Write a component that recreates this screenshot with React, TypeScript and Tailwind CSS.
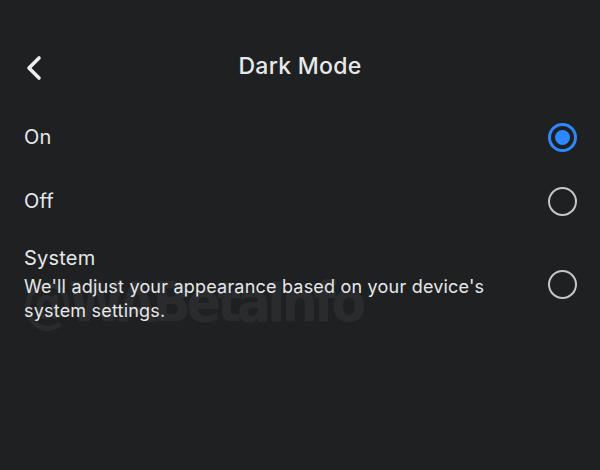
import React, { useState } from "react";

type Option = { id: string; label: string; desc?: string };

const options: Option[] = [
  { id: "on", label: "On" },
  { id: "off", label: "Off" },
  {
    id: "system",
    label: "System",
    desc: "We'll adjust your appearance based on your device's system settings.",
  },
];

const Radio = ({ checked }: { checked: boolean }) => {
  if (checked) {
    return (
      <div className="w-[29px] h-[29px] rounded-full border-[3px] border-[#2d88ff] flex items-center justify-center">
        <div className="w-[15px] h-[15px] rounded-full bg-[#2d88ff]" />
      </div>
    );
  }
  return <div className="w-[29px] h-[29px] rounded-full border-[2.5px] border-[#c4c6ca]" />;
};

export default function App() {
  const [selected, setSelected] = useState("on");

  return (
    <div
      className="w-[600px] h-[470px] bg-[#1f2022] text-[#e7e8ea] relative overflow-hidden"
      style={{ fontFamily: "Inter, 'Noto Sans', sans-serif" }}
    >
      {/* watermark */}
      <div
        className="absolute left-[22px] top-[270px] text-[56px] leading-[64px] font-black text-white/[0.05] pointer-events-none tracking-[-4px]"
        style={{ fontFamily: "'DejaVu Sans Condensed', 'DejaVu Sans', sans-serif" }}
      >
        @WABetaInfo
      </div>

      {/* header */}
      <div className="h-[68px] mt-[34px] flex items-center relative">
        <button className="absolute left-[24px] top-[20px] w-[22px] h-[28px] flex items-center">
          <svg width="20" height="26" viewBox="0 0 20 26" fill="none">
            <path d="M15 3 L5 13 L15 23" stroke="#eceef0" strokeWidth="3.6" strokeLinecap="round" strokeLinejoin="round" />
          </svg>
        </button>
        <h1 className="w-full text-center text-[23px] font-medium tracking-[0.3px] -mt-[4px]">Dark Mode</h1>
      </div>

      {/* options */}
      <div className="flex flex-col pt-[3px] relative">
        {options.map((o) => (
          <div
            key={o.id}
            onClick={() => setSelected(o.id)}
            className={`flex items-center justify-between pl-[24px] pr-[23px] ${o.desc ? "pt-[12px]" : "h-[64px]"}`}
          >
            <div>
              <p className="text-[20px] leading-[26px] tracking-[0.2px]">{o.label}</p>
              {o.desc && (
                <p className="text-[18px] leading-[24px] w-[480px] mt-[4px] tracking-[0.2px]">{o.desc}</p>
              )}
            </div>
            <Radio checked={selected === o.id} />
          </div>
        ))}
      </div>
    </div>
  );
}
